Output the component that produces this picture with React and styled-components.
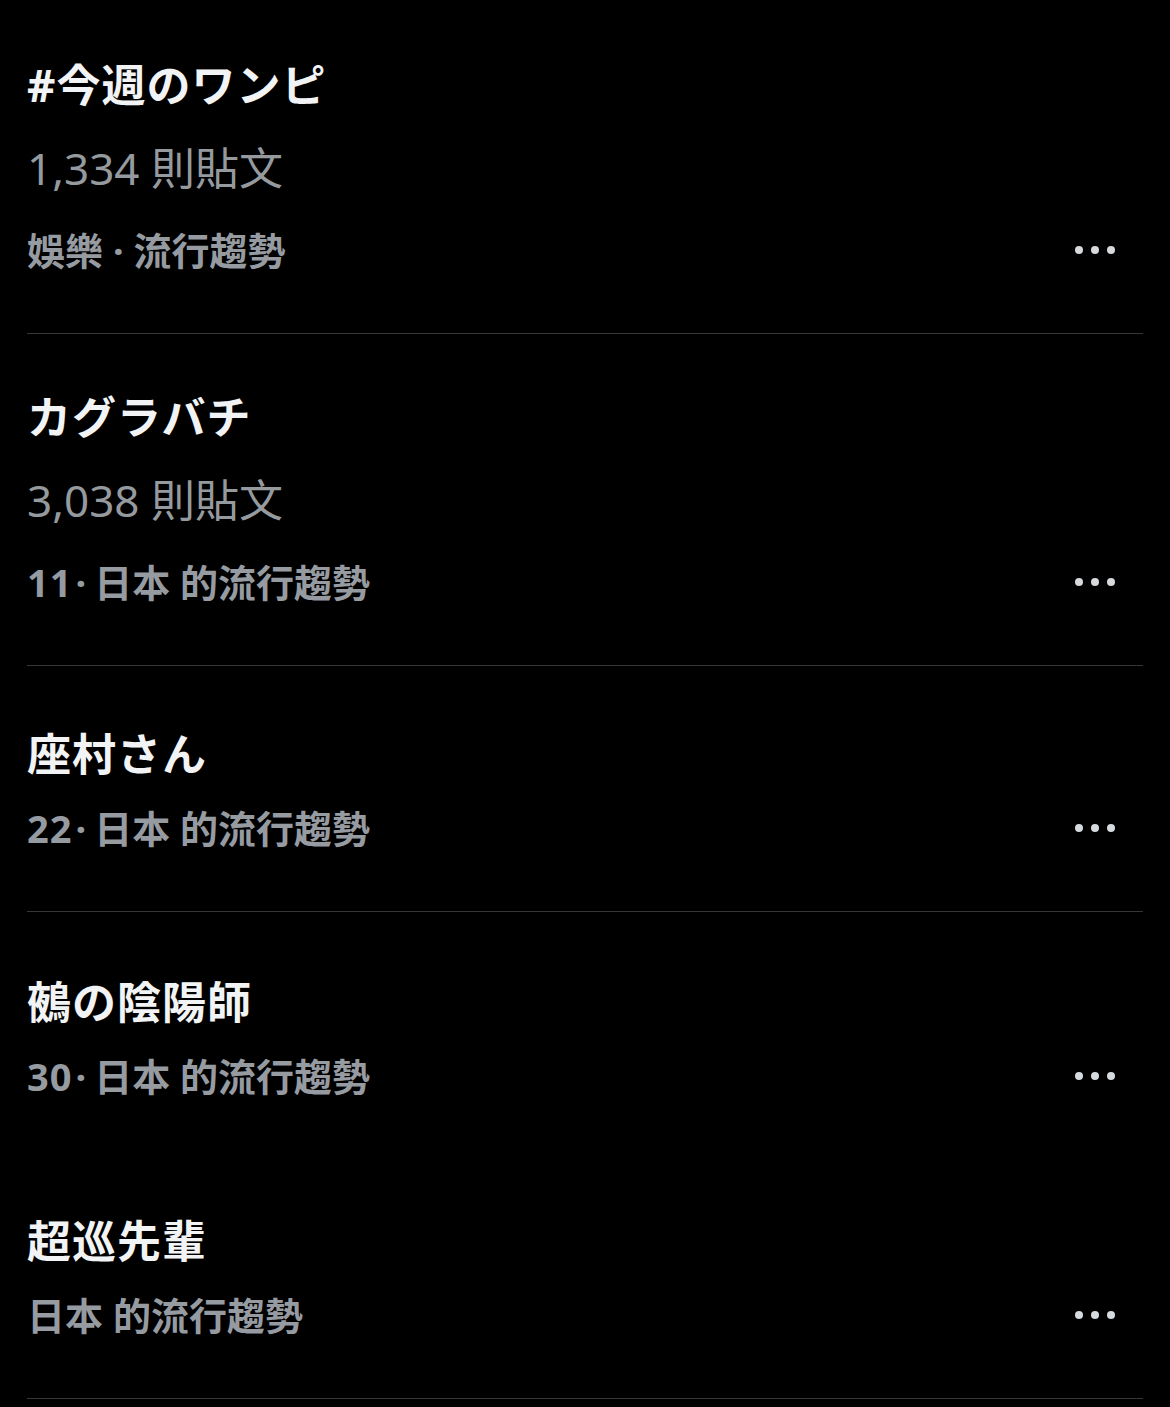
import React from "react";
import styled, { createGlobalStyle } from "styled-components";

const Global = createGlobalStyle`
  html, body {
    margin: 0;
    padding: 0;
    background: #000;
  }
  body {
    font-family: "Noto Sans", "Noto Sans CJK TC", sans-serif;
    -webkit-font-smoothing: antialiased;
  }
`;

const Page = styled.div`
  min-height: 1407px;
  background: #000;
  padding: 2px 27px 0;
  box-sizing: border-box;
`;

const Item = styled.div`
  display: flex;
  flex-direction: column;
  padding-top: ${(p) => p.$pt}px;
  padding-bottom: ${(p) => p.$pb}px;
  border-bottom: 1px solid ${(p) => (p.$divider ? "#34383b" : "transparent")};
`;

const Title = styled.div`
  font-family: "Noto Sans", "Noto Sans CJK JP", sans-serif;
  font-weight: 700;
  font-size: 44px;
  line-height: 56px;
  height: 56px;
  letter-spacing: 1px;
  color: #f2f3f4;
  white-space: nowrap;
`;

const Count = styled.div`
  font-family: "Noto Sans", "Noto Sans CJK TC", sans-serif;
  font-weight: 400;
  font-size: 44px;
  line-height: 56px;
  height: 56px;
  margin-top: 27px;
  color: #959a9f;
  white-space: nowrap;
`;

const MetaRow = styled.div`
  display: flex;
  align-items: center;
  justify-content: space-between;
  height: 56px;
  margin-top: ${(p) => p.$mt}px;
`;

const Meta = styled.div`
  font-family: "Noto Sans", "Noto Sans CJK TC", sans-serif;
  font-weight: 700;
  font-size: 38px;
  line-height: 56px;
  color: #969ba1;
  white-space: nowrap;
`;

const Rank = styled.span`
  font-weight: 700;
  letter-spacing: 1px;
`;

const Sep = styled.span`
  margin: 0 8px 0 3px;
`;

const MoreButton = styled.button`
  display: flex;
  align-items: center;
  justify-content: center;
  background: none;
  border: 0;
  padding: 0;
  margin-right: 28px;
  width: 40px;
  height: 40px;
  cursor: pointer;
`;

const Dots = () => (
  <svg width="40" height="8" viewBox="0 0 40 8" aria-hidden="true">
    <circle cx="4" cy="4" r="4" fill="#d7dadd" />
    <circle cx="20" cy="4" r="4" fill="#d7dadd" />
    <circle cx="36" cy="4" r="4" fill="#d7dadd" />
  </svg>
);

const trends = [
  { title: "#今週のワンピ", count: "1,334 則貼文", meta: "娛樂 · 流行趨勢", rank: null },
  { title: "カグラバチ", count: "3,038 則貼文", rank: "11", meta: "日本 的流行趨勢" },
  { title: "座村さん", rank: "22", meta: "日本 的流行趨勢" },
  { title: "鵺の陰陽師", rank: "30", meta: "日本 的流行趨勢", divider: false, pt: 62, pb: 48 },
  { title: "超巡先輩", meta: "日本 的流行趨勢" },
];

export default function App() {
  return (
    <>
      <Global />
      <Page>
        {trends.map((t) => {
          const three = Boolean(t.count);
          const pt = t.pt ?? (three ? 55 : 60);
          const pb = t.pb ?? 55;
          const divider = t.divider !== false;
          return (
            <Item key={t.title} $pt={pt} $pb={pb} $divider={divider}>
              <Title>{t.title}</Title>
              {t.count && <Count>{t.count}</Count>}
              <MetaRow $mt={three ? 26 : 18}>
                <Meta>
                  {t.rank && (
                    <>
                      <Rank>{t.rank}</Rank>
                      <Sep>·</Sep>
                    </>
                  )}
                  {t.meta}
                </Meta>
                <MoreButton aria-label="更多">
                  <Dots />
                </MoreButton>
              </MetaRow>
            </Item>
          );
        })}
      </Page>
    </>
  );
}
